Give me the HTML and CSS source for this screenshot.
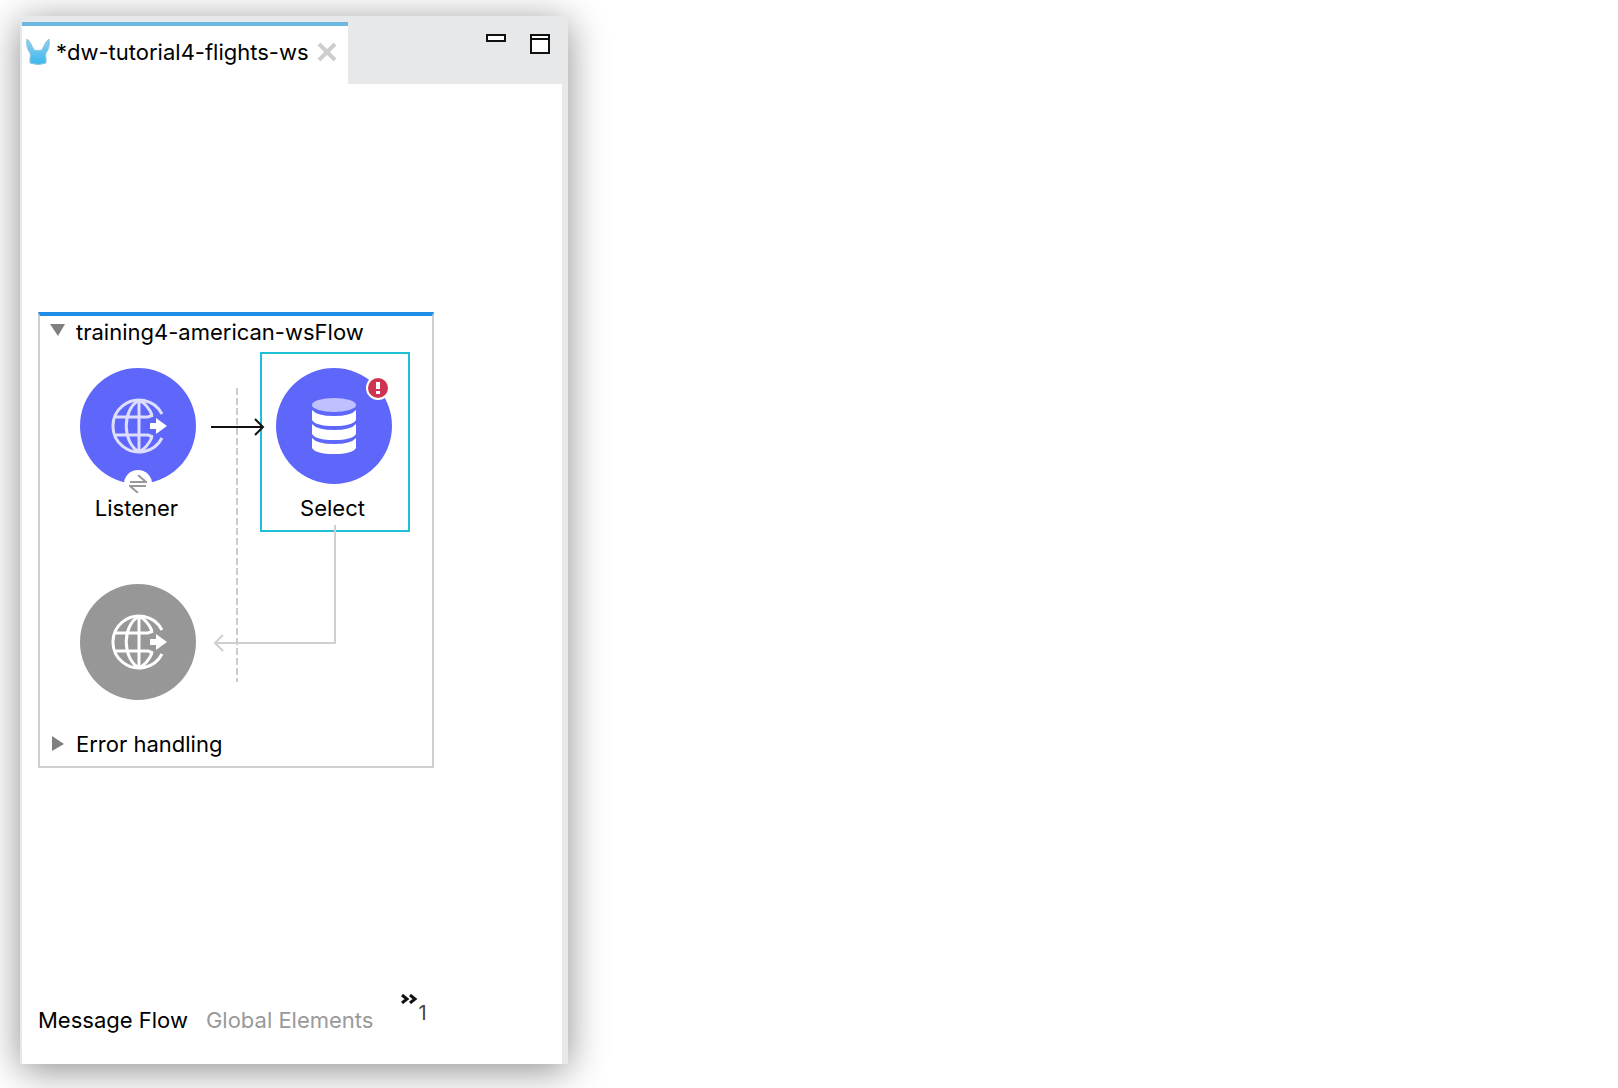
FILE: index.html
```html
<!DOCTYPE html>
<html lang="en">
<head>
<meta charset="utf-8">
<title>dw-tutorial4-flights-ws</title>
<link rel="stylesheet" href="styles.css">
</head>
<body>
<main class="editor">
  <header class="tabbar">
    <div class="tab">
      <svg class="tab-icon" width="24" height="28" viewBox="0 0 24 28" aria-hidden="true">
        <defs><linearGradient id="ears" x1="0" y1="0" x2="0" y2="1"><stop offset="0" stop-color="#8fd0f0"/><stop offset="1" stop-color="#3cb6ee"/></linearGradient></defs>
        <path fill="url(#ears)" stroke="#8cc4e0" d="M1 1C0 6 1 11 4 15Q5 18 4 20V25Q12 28 20 25V20Q19 18 20 15C23 11 24 6 23 1C20 3 18 8 16 12Q12 13 8 12C6 8 4 3 1 1Z"/>
      </svg>
      <span class="tab-title">*dw-tutorial4-flights-ws</span>
      <button class="close" type="button" aria-label="Close">
        <svg width="20" height="20" viewBox="0 0 20 20"><path d="M2 2L18 18M18 2L2 18" stroke="#cdcdcd" stroke-width="4"/></svg>
      </button>
    </div>
    <div class="controls">
      <button type="button" aria-label="Minimize">
        <svg width="20" height="20" viewBox="0 0 20 20"><path d="M1 1H19V7H1Z" fill="#fff" stroke="#111" stroke-width="2"/></svg>
      </button>
      <button type="button" aria-label="Maximize">
        <svg width="20" height="20" viewBox="0 0 20 20"><path d="M1 1H19V19H1ZM1 5H19" fill="#fff" stroke="#111" stroke-width="2"/></svg>
      </button>
    </div>
  </header>

  <div class="canvas">
    <section class="flow">
      <button class="section-toggle" type="button" aria-expanded="true">
        <svg width="16" height="16" viewBox="0 0 16 16"><path d="M0 0H15L8 12Z" fill="#7f7f7f"/></svg>
        training4-american-wsFlow
      </button>
      <div class="diagram">
        <div class="node listener">
          <div class="disc">
            <svg width="60" height="56" viewBox="-4 0 60 56" fill="none">
              <path stroke="#dddeff" stroke-width="3" d="M50 16A26 26 0 1 0 50 40M27 2V54M3 19H36L41 17M3 37H36L41 39M27 2C10 12 10 44 27 54M27 2Q36 7 40 17M27 54Q36 49 40 39"/>
              <path fill="#fff" d="M38 25H44V20L55 28L44 36V31H38Z"/>
            </svg>
          </div>
          <span class="exchange">
            <svg width="18" height="18" viewBox="0 0 18 18"><path d="M1 7H17L9 0M17 11H1L9 18" fill="none" stroke="#999" stroke-width="2"/></svg>
          </span>
          <span class="label">Listener</span>
        </div>
        <div class="node select">
          <div class="disc">
            <svg width="44" height="56" viewBox="0 0 44 56">
              <ellipse cx="22" cy="7" rx="22" ry="7" fill="#bfc1ff"/>
              <path fill="#fff" d="M0 12Q5 18 22 18T44 12V22Q40 28 22 28T0 22ZM0 26Q5 32 22 32T44 26V36Q40 42 22 42T0 36ZM0 40Q5 46 22 46T44 40V50Q40 56 22 56T0 50Z"/>
            </svg>
          </div>
          <svg class="alert" width="24" height="24" viewBox="0 0 24 24"><circle cx="12" cy="12" r="11" fill="#d03352" stroke="#fff" stroke-width="2"/><path d="M10 6H14V13H10ZM10 15H14V18H10Z" fill="#fff"/></svg>
          <span class="label">Select</span>
        </div>
        <div class="node response">
          <div class="disc">
            <svg width="60" height="56" viewBox="-4 0 60 56" fill="none">
              <path stroke="#fff" stroke-width="3" d="M50 16A26 26 0 1 0 50 40M27 2V54M3 19H36L41 17M3 37H36L41 39M27 2C10 12 10 44 27 54M27 2Q36 7 40 17M27 54Q36 49 40 39"/>
              <path fill="#fff" d="M38 25H44V20L55 28L44 36V31H38Z"/>
            </svg>
          </div>
        </div>
        <svg class="links" width="392" height="374" viewBox="0 0 392 374" fill="none" stroke-width="2">
          <path d="M197 40V334" stroke="#cdcdcd" stroke-dasharray="7 3"/>
          <path d="M171 79H223M215 71L223 79L215 87" stroke="#111"/>
          <path d="M295 177V295H175M183 287L175 295L183 303" stroke="#cfcfcf"/>
        </svg>
      </div>
      <button class="section-toggle errors" type="button" aria-expanded="false">
        <svg width="16" height="16" viewBox="0 0 16 16"><path d="M2 0V15L14 8Z" fill="#7f7f7f"/></svg>
        Error handling
      </button>
    </section>
  </div>

  <nav class="views">
    <button class="view current" type="button">Message Flow</button>
    <button class="view" type="button">Global Elements</button>
    <button class="more" type="button" aria-label="1 more view">
      <svg width="17" height="10" viewBox="0 0 17 10"><path d="M1 1L6 5L1 9M9 1L14 5L9 9" fill="none" stroke="#111" stroke-width="3"/></svg>
      <span>1</span>
    </button>
  </nav>
</main>
</body>
</html>
```
FILE: styles.css
```css
* { box-sizing: border-box; }

body {
  display: flex;
  min-height: 100vh;
  margin: 0;
  padding: 16px 32px 24px 20px;
  background: #fff;
  color: #000;
  font: 22px/28px Inter, "Liberation Sans", sans-serif;
}

button {
  padding: 0;
  border: 0;
  background: none;
  color: inherit;
  font: inherit;
}

svg { display: block; flex: none; }

.editor {
  display: flex;
  flex-direction: column;
  width: 35%;
  min-width: 500px;
  border: solid #e7e8ea;
  border-width: 0 6px 0 2px;
  background: #fff;
  box-shadow: 0 6px 36px rgba(0, 0, 0, .45);
}

.tabbar {
  display: flex;
  justify-content: space-between;
  padding-top: 6px;
  background: #e7e8ea;
}

.tab {
  display: flex;
  align-items: center;
  width: 326px;
  height: 62px;
  padding: 0 11px 6px 4px;
  border-top: 4px solid #6cb8e0;
  background: #fff;
}

.tab-title { flex: 1; margin-left: 6px; white-space: nowrap; }

.controls {
  display: flex;
  align-items: flex-start;
  gap: 24px;
  padding: 12px 12px 0 0;
}

.canvas {
  display: flex;
  flex: 1;
  align-items: center;
  padding: 0 16px;
}

.flow {
  width: 396px;
  border: 2px solid #cfcfcf;
  border-top: 4px solid #1e8ee8;
}

.section-toggle {
  display: flex;
  align-items: center;
  gap: 10px;
  width: 100%;
  height: 32px;
  padding-left: 10px;
}

.errors { height: 44px; }

.diagram { position: relative; height: 374px; }

.links { position: absolute; inset: 0; }

.node {
  position: absolute;
  display: flex;
  flex-direction: column;
  align-items: center;
  width: 150px;
  padding-top: 14px;
  border: 2px solid transparent;
}

.listener { left: 23px; top: 4px; }

.select {
  left: 220px;
  top: 4px;
  height: 180px;
  padding-right: 2px;
  border-color: #1fbfd8;
}

.response { left: 23px; top: 220px; }

.disc {
  display: grid;
  place-items: center;
  width: 116px;
  height: 116px;
  border-radius: 50%;
  background: #5f67fb;
}

.response .disc { background: #979797; }

.label { margin-top: 10px; padding-right: 3px; }

.exchange {
  position: absolute;
  top: 116px;
  display: grid;
  place-items: center;
  width: 28px;
  height: 28px;
  border-radius: 50%;
  background: #fff;
}

.alert { position: absolute; left: 104px; top: 22px; }

.views {
  display: flex;
  align-items: center;
  gap: 18px;
  height: 68px;
  padding: 0 16px 20px;
}

.view { color: #999; white-space: nowrap; }

.current { color: #000; }

.more {
  display: flex;
  align-items: flex-start;
  margin: 0 0 14px 10px;
  color: #444;
  font-size: 20px;
  line-height: 38px;
}
```
